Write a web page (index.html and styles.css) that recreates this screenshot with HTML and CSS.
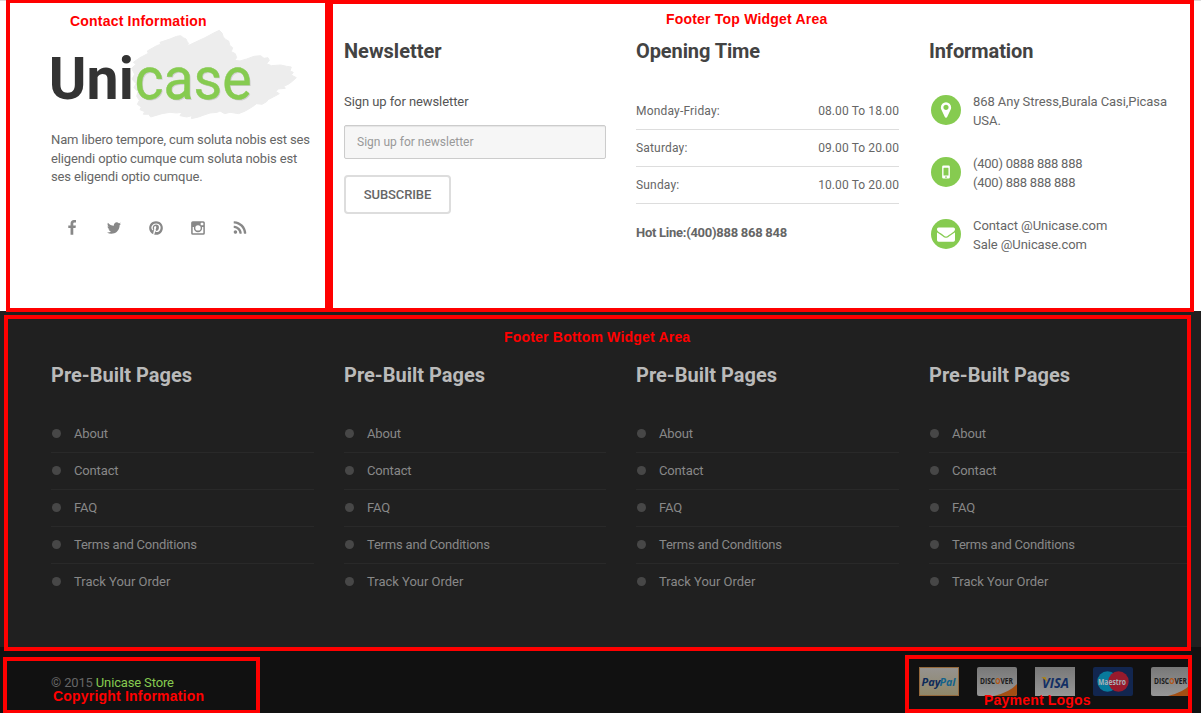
FILE: index.html
```html
<!DOCTYPE html>
<html lang="en">
<head>
<meta charset="utf-8">
<title>Unicase Footer</title>
<link rel="stylesheet" href="styles.css">
</head>
<body>
<footer class="footer">
  <section class="top">
    <div class="col contact">
      <svg class="logo" viewBox="51 25 250 100" width="250" height="100">
        <g transform="translate(130 25) scale(.3333)">
          <path class="brush" d="M5 130L18 118L10 112L30 98L55 85L52 78L80 62L92 58L90 52L120 42L140 34L152 32L160 38L168 42L172 50L176 56L170 64L195 52L225 38L255 22L268 16L276 24L280 36L288 44L296 48L300 62L308 68L304 80L316 86L320 98L314 106L330 108L350 102L372 94L392 92L402 100L414 98L418 106L410 116L424 122L452 120L470 124L484 126L480 138L490 142L484 150L499 158L488 168L478 176L462 184L466 190L444 192L438 200L448 206L430 216L414 224L410 230L396 238L380 236L366 246L346 258L326 266L300 262L284 266L270 258L262 262L240 264L222 270L206 276L184 281L186 272L170 276L150 272L156 262L140 264L120 262L96 266L62 276L56 268L40 268L44 260L30 254L34 246L22 238L28 226L20 214L24 200L12 188L18 176L6 162L14 148Z"/>
        </g>
        <text class="logo-dark" x="48.800" y="98.500" textLength="85" lengthAdjust="spacingAndGlyphs">Uni</text>
        <text class="logo-shadow" x="135.500" y="99.500" textLength="117" lengthAdjust="spacingAndGlyphs">case</text>
        <text class="logo-green" x="134.500" y="98.500" textLength="117" lengthAdjust="spacingAndGlyphs">case</text>
      </svg>
      <p class="about">Nam libero tempore, cum soluta nobis est ses eligendi optio cumque cum soluta nobis est ses eligendi optio cumque.</p>
      <div class="social">
        <svg viewBox="0 0 1792 1792"><path d="M1343 12v264h-157q-86 0-116 36t-30 108v189h293l-39 296h-254v759h-306v-759h-255v-296h255v-218q0-186 104-288.500t277-102.500q147 0 228 12z"/></svg>
        <svg viewBox="0 0 1792 1792"><path d="M1684 408q-67 98-162 167 1 14 1 42 0 130-38 259.500t-115.500 248.500-184.500 210.500-258 146-323 54.500q-271 0-496-145 35 4 78 4 225 0 401-138-105-2-188-64.500t-114-159.500q33 5 61 5 43 0 85-11-112-23-185.500-111.500t-73.500-205.500v-4q68 38 146 41-66-44-105-115t-39-154q0-88 44-163 121 149 294.500 238.500t371.500 99.500q-8-38-8-74 0-134 94.500-228.500t228.500-94.500q140 0 236 102 109-21 205-78-37 115-142 178 93-10 186-50z"/></svg>
        <svg viewBox="0 0 1792 1792"><path d="M1664 896q0 209-103 385.500t-279.500 279.500-385.500 103q-111 0-218-32 59-93 78-164 9-34 54-211 20 39 73 67.500t114 28.500q121 0 216-68.500t147-188.500 52-270q0-114-59.500-214t-172.500-163-255-63q-105 0-196 29t-154.500 77-109 110.500-67 129.500-21.500 134q0 104 40 183t117 111q30 12 38-20 2-7 8-31t8-30q6-23-11-43-51-61-51-151 0-151 104.500-259.500t273.500-108.500q151 0 235.500 82t84.500 213q0 170-68.500 289t-175.500 119q-61 0-98-43.500t-23-104.500q8-35 26.500-93.500t30-103 11.500-75.500q0-50-27-83t-77-33q-62 0-105 57t-43 142q0 73 25 122l-99 418q-17 70-13 177-206-91-333-281t-127-423q0-209 103-385.500t279.500-279.500 385.500-103 385.500 103 279.500 279.500 103 385.500z"/></svg>
        <svg viewBox="0 0 1792 1792"><path fill-rule="evenodd" d="M310 128h1172q182 0 182 182v1172q0 182-182 182H310q-182 0-182-182V310q0-182 182-182zM302 778v650q0 58 58 58h1074q58 0 58-58V778h-154q22 68 22 142c0 250-200 446-464 446S432 1170 432 920q0-74 22-142zM896 596a300 290 0 1 0 0 580 300 290 0 1 0 0-580zM1260 302q-66 0-66 66v166q0 66 66 66h170q66 0 66-66V368q0-66-66-66z"/></svg>
        <svg viewBox="0 0 1792 1792"><path d="M576 1344q0 80-56 136t-136 56-136-56-56-136 56-136 136-56 136 56 56 136zm512 123q2 28-17 48-18 21-47 21h-135q-25 0-43-16.500t-20-41.500q-22-229-184.500-391.500t-391.500-184.500q-25-2-41.500-20t-16.500-43v-135q0-29 21-47 17-17 43-17h5q160 13 306 80.500t259 181.500q114 113 181.500 259t80.500 306zm512 2q2 27-18 47-18 20-46 20h-143q-26 0-44.500-17.500t-19.500-42.500q-12-215-101-408.500t-231.500-336-336-231.500-408.500-102q-25-1-42.500-19.500t-17.500-43.500v-143q0-28 20-46 18-18 44-18h3q262 13 501.500 120t425.500 294q187 186 294 425.500t120 501.500z"/></svg>
      </div>
    </div>
    <div class="col">
      <h4 class="title">Newsletter</h4>
      <label class="label" for="email">Sign up for newsletter</label>
      <input class="field" id="email" type="email" placeholder="Sign up for newsletter">
      <button class="button" type="button">SUBSCRIBE</button>
    </div>
    <div class="col">
      <h4 class="title opening">Opening Time</h4>
      <ul class="hours">
        <li><span>Monday-Friday:</span><span class="time">08.00 To 18.00</span></li>
        <li><span>Saturday:</span><span class="time">09.00 To 20.00</span></li>
        <li><span>Sunday:</span><span class="time">10.00 To 20.00</span></li>
      </ul>
      <p class="hotline">Hot Line:(400)888 868 848</p>
    </div>
    <div class="col">
      <h4 class="title opening">Information</h4>
      <ul class="info">
        <li><span class="disc"><svg viewBox="0 0 1792 1792"><path d="M1152 640q0-106-75-181t-181-75-181 75-75 181 75 181 181 75 181-75 75-181zm256 0q0 109-33 179l-364 774q-16 33-47.500 52t-67.500 19-67.500-19-46.500-52l-365-774q-33-70-33-179 0-212 150-362t362-150 362 150 150 362z"/></svg></span><span>868 Any Stress,Burala Casi,Picasa<br>USA.</span></li>
        <li><span class="disc"><svg viewBox="0 0 1792 1792"><path fill-rule="evenodd" d="M640 256h512q128 0 128 128v1024q0 128-128 128H640q-128 0-128-128V384q0-128 128-128zM680 480q-32 0-32 32v704q0 32 32 32h432q32 0 32-32V512q0-32-32-32zM896 1328a80 80 0 1 0 0 160 80 80 0 1 0 0-160z"/></svg></span><span class="phone">(400) 0888 888 888<br>(400) 888 888 888</span></li>
        <li><span class="disc"><svg viewBox="0 0 1792 1792"><path d="M1792 710v794q0 66-47 113t-113 47h-1472q-66 0-113-47t-47-113v-794q44 49 101 87 362 246 497 345 57 42 92.500 65.500t94.500 48 110 24.500h2q51 0 110-24.500t94.500-48 92.500-65.500q170-123 498-345 57-39 100-87zm0-294q0 79-49 151t-122 123q-376 261-468 325-10 7-42.500 30.500t-54 38-52 32.500-57.500 27-50 9h-2q-23 0-50-9t-57.500-27-52-32.500-54-38-42.500-30.500q-91-64-262-182.500t-205-142.500q-62-42-117-115.500t-55-136.500q0-78 41.500-130t118.500-52h1472q65 0 112.500 47t47.500 113z"/></svg></span><span>Contact @Unicase.com<br>Sale @Unicase.com</span></li>
      </ul>
    </div>
  </section>

  <section class="bottom">
    <div class="col"><h4 class="title">Pre-Built Pages</h4><ul class="links"><li>About</li><li>Contact</li><li>FAQ</li><li class="tight">Terms and Conditions</li><li class="loose">Track Your Order</li></ul></div>
    <div class="col"><h4 class="title">Pre-Built Pages</h4><ul class="links"><li>About</li><li>Contact</li><li>FAQ</li><li class="tight">Terms and Conditions</li><li class="loose">Track Your Order</li></ul></div>
    <div class="col"><h4 class="title">Pre-Built Pages</h4><ul class="links"><li>About</li><li>Contact</li><li>FAQ</li><li class="tight">Terms and Conditions</li><li class="loose">Track Your Order</li></ul></div>
    <div class="col"><h4 class="title">Pre-Built Pages</h4><ul class="links"><li>About</li><li>Contact</li><li>FAQ</li><li class="tight">Terms and Conditions</li><li class="loose">Track Your Order</li></ul></div>
  </section>

  <section class="copyright">
    <p class="copy">© 2015 <a href="#">Unicase Store</a></p>
    <div class="cards">
      <svg viewBox="0 0 40 29">
        <defs><linearGradient id="pp" x1="0" y1="0" x2="0" y2="1"><stop offset="0" stop-color="#969390"/><stop offset="1" stop-color="#8f8768"/></linearGradient><linearGradient id="gr" x1="0" y1="0" x2="0" y2="1"><stop offset="0" stop-color="#787878"/><stop offset="1" stop-color="#969696"/></linearGradient></defs>
        <rect x=".5" y=".5" width="39" height="28" fill="url(#pp)" stroke="#94693c"/>
        <text class="paypal" x="2.500" y="18.500" textLength="19" lengthAdjust="spacingAndGlyphs" fill="#0d2a58">Pay</text>
        <text class="paypal" x="20.500" y="18.500" textLength="16" lengthAdjust="spacingAndGlyphs" fill="#14628a">Pal</text>
      </svg>
      <svg viewBox="0 0 40 29">
        <rect width="40" height="29" rx="2" fill="url(#gr)"/>
        <path d="M40 17Q33 25 17 29H38Q40 29 40 27Z" fill="#a34f14"/>
        <text class="discover" x="3" y="16.500" textLength="33" lengthAdjust="spacingAndGlyphs">DISC<tspan fill="#b4540f">O</tspan>VER</text>
      </svg>
      <svg viewBox="0 0 40 29">
        <rect width="40" height="29" fill="url(#gr)"/>
        <text class="visa" x="7" y="20.500" textLength="27" lengthAdjust="spacingAndGlyphs">VISA</text>
        <path d="M6.500 10H10.500L12.500 15Z" fill="#a8841c"/>
      </svg>
      <svg viewBox="0 0 40 29">
        <rect width="40" height="29" rx="2" fill="#12264f"/>
        <circle cx="14.500" cy="14.500" r="10.200" fill="#087a9c"/>
        <circle cx="25.500" cy="14.500" r="10.200" fill="#981a2c"/>
        <text class="maestro" x="5" y="17.500" textLength="28" lengthAdjust="spacingAndGlyphs">Maestro</text>
      </svg>
      <svg viewBox="0 0 40 29">
        <rect width="40" height="29" rx="2" fill="url(#gr)"/>
        <path d="M40 17Q33 25 17 29H38Q40 29 40 27Z" fill="#a34f14"/>
        <text class="discover" x="3" y="16.500" textLength="33" lengthAdjust="spacingAndGlyphs">DISC<tspan fill="#b4540f">O</tspan>VER</text>
      </svg>
    </div>
  </section>

  <div class="mark mark-contact"><span>Contact Information</span></div>
  <div class="mark mark-top"><span>Footer Top Widget Area</span></div>
  <div class="mark mark-bottom"><span>Footer Bottom Widget Area</span></div>
  <div class="mark mark-copy"><span>Copyright Information</span></div>
  <div class="mark mark-pay"><span>Payment Logos</span></div>
</footer>
</body>
</html>
```
FILE: styles.css
```css
* { box-sizing: border-box; }
body { margin: 0; background: #fff; overflow: hidden; font: 13px/18.571px Roboto, sans-serif; color: #666; }
ul, p, h4 { margin: 0; padding: 0; list-style: none; }
.footer { position: relative; width: 1201px; height: 713px; overflow: hidden; }
.top, .bottom { display: grid; grid-template-columns: 263px 262px 263px 262px; column-gap: 30px; padding-left: 51px; }
.top { height: 311px; border-top: 1px solid #ddd; }
.title { font-size: 20px; line-height: 22px; font-weight: 700; color: #434343; }
.top .title { margin-top: 39px; }
.opening { letter-spacing: -.1px; }

.contact { padding-top: 24px; }
.logo { display: block; overflow: visible; }
.brush { fill: #ededed; stroke: #ededed; stroke-width: 3; }
.logo text { font-family: Roboto, sans-serif; }
.logo-dark { font-size: 60px; font-weight: 700; fill: #333; }
.logo-green, .logo-shadow { font-size: 59px; }
.logo-green { fill: #86cb50; stroke: #86cb50; stroke-width: .4; }
.logo-shadow { fill: #cfcfcf; }
.about { margin: 6px -10px 0 0; width: 264px; letter-spacing: -.13px; }
.social { display: flex; gap: 26px; margin: 33px 0 0 13px; }
.social svg { width: 16px; height: 16px; fill: #888; }

.label { display: block; margin-top: 30px; line-height: 19px; color: #555; letter-spacing: -.08px; }
.field { display: block; width: 262px; height: 34px; margin-top: 14px; padding: 0 12px; border: 1px solid #ccc; border-radius: 2px; background: #f6f6f6; box-shadow: inset 0 1px 1px rgba(0,0,0,.07); font: 12px Roboto, sans-serif; }
.field::placeholder { color: #999; }
.button { margin-top: 16px; width: 107px; height: 39px; padding: 0; border: 2px solid #ddd; border-radius: 4px; background: #fff; color: #666; font: 500 13px Roboto, sans-serif; letter-spacing: -.1px; }

.hours { margin-top: 31px; font-size: 12px; letter-spacing: .18px; }
.hours li { display: flex; justify-content: space-between; height: 37px; padding-top: 9px; border-bottom: 1px solid #ddd; }
.time { letter-spacing: .1px; }
.hotline { margin-top: 20px; font-weight: 700; letter-spacing: -.27px; }

.info { display: grid; gap: 24px; margin-top: 30px; line-height: 19px; letter-spacing: -.07px; }
.info li { display: flex; gap: 12px; height: 38px; white-space: nowrap; }
.phone { letter-spacing: -.24px; }
.disc { display: flex; align-items: center; justify-content: center; width: 30px; height: 30px; margin: 3px 0 0 2px; border-radius: 50%; background: #86cb50; }
.disc svg { width: 18px; height: 18px; fill: #fff; }

.bottom { height: 336px; background: #202020; }
.bottom .title { margin-top: 53px; color: #bababa; }
.links { margin-top: 30px; color: #888; }
.links li { display: flex; align-items: center; gap: 13px; height: 37px; padding-left: 1px; border-bottom: 1px solid #292929; letter-spacing: -.15px; }
.links .tight { letter-spacing: -.2px; }
.links .loose { letter-spacing: -.02px; }
.links li:last-child { border-bottom-color: transparent; }
.links li::before { content: ""; width: 9px; height: 9px; margin-top: -1px; border-radius: 50%; background: #474747; }

.copyright { display: flex; justify-content: space-between; height: 66px; padding: 20px 10px 0 51px; background: #111; }
.copy { margin-top: 7px; color: #666; letter-spacing: -.15px; }
.copy a { color: #86cb50; text-decoration: none; }
.cards { display: flex; gap: 18px; }
.cards svg { width: 40px; height: 29px; }
.cards text { font-family: "Open Sans", sans-serif; font-weight: 700; }
.paypal, .visa { font-style: italic; }
.cards .paypal { font-size: 11px; }
.cards .visa { font-size: 15px; fill: #132f64; }
.cards .discover { font-size: 8.500px; fill: #1c1c1c; }
.cards .maestro { font-size: 8.500px; fill: #a9b1b8; }

.mark { position: absolute; border: 4px solid #f00; color: #f00; font: 700 14px/16px "Liberation Sans", sans-serif; letter-spacing: .2px; white-space: nowrap; pointer-events: none; }
.mark span { position: absolute; }
.mark-contact { left: 6px; top: -1px; width: 323px; height: 313px; }
.mark-contact span { left: 60px; top: 10px; }
.mark-top { left: 329px; top: 0; width: 865px; height: 312px; }
.mark-top span { left: 333px; top: 7px; }
.mark-bottom { left: 4px; top: 315px; width: 1187px; height: 336px; }
.mark-bottom span { left: 496px; top: 10px; }
.mark-copy { left: 3px; top: 657px; width: 257px; height: 57px; }
.mark-copy span { left: 46px; top: 27px; }
.mark-pay { left: 905px; top: 655px; width: 287px; height: 58px; }
.mark-pay span { left: 75px; top: 33px; }
```
